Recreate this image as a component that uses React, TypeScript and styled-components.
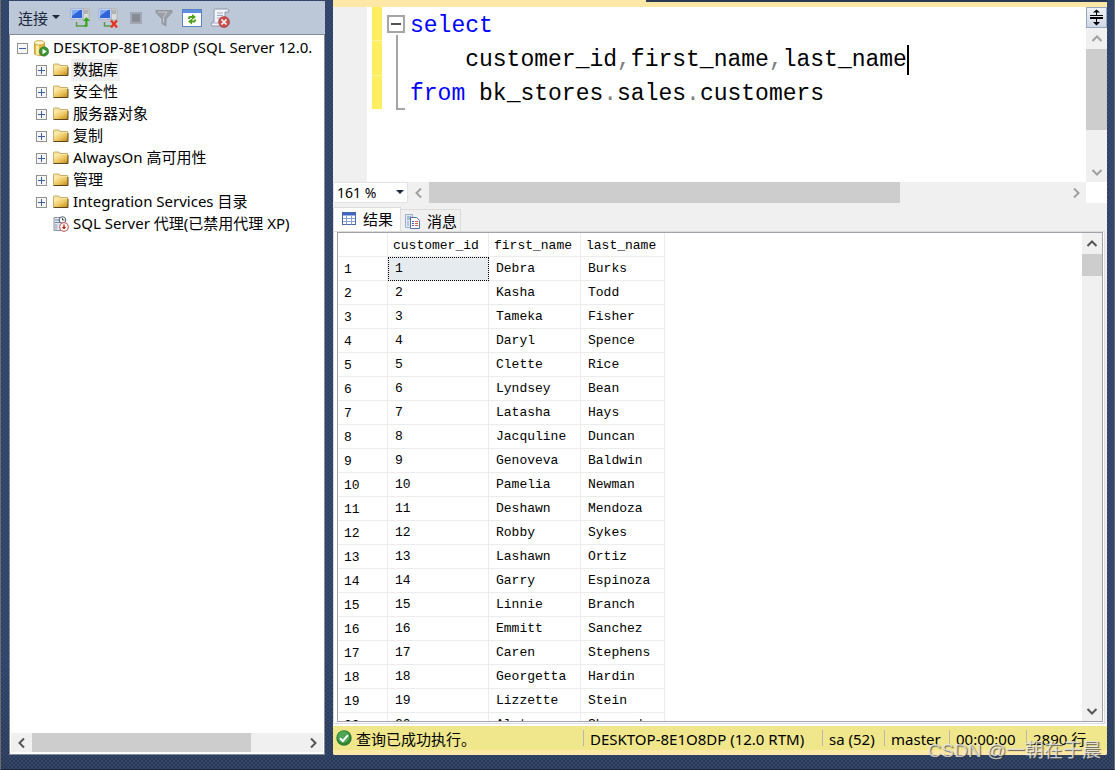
import React from "react";
import styled, { createGlobalStyle, css } from "styled-components";

const uiFont = `"Noto Sans", "Noto Sans CJK SC", sans-serif`;
const monoFont = `"Liberation Mono", "Noto Sans CJK SC", monospace`;

const GlobalStyle = createGlobalStyle`
  * { box-sizing: border-box; }
  body {
    margin: 0;
    background: #293955;
    color: #000;
    font-family: ${uiFont};
    font-size: 15px;
    overflow: hidden;
  }
  button, select { font: inherit; color: inherit; }
  button { border: 0; padding: 0; background: none; }
  svg { display: block; flex: none; }
`;

const Frame = styled.div`
  display: flex;
  gap: 8px;
  height: 100vh;
  padding: 0 7px 14px 8px;
  border: solid #6d6d70;
  border-width: 0 1px 0 1px;
  border-bottom: 1px solid #1d2740;
  background:
    radial-gradient(circle at 1px 1px, rgba(70, 95, 140, 0.35) 1px, transparent 1px) 0 0 / 4px 4px,
    radial-gradient(circle at 1px 1px, rgba(70, 95, 140, 0.35) 1px, transparent 1px) 2px 2px / 4px 4px,
    linear-gradient(#2f4165, #2f4165 85%, #293955);
`;

const Explorer = styled.aside`
  flex: 0 0 316px;
  display: flex;
  flex-direction: column;
  padding-top: 1px;
`;

const Toolbar = styled.div`
  display: flex;
  align-items: center;
  gap: 8px;
  height: 33px;
  padding-left: 9px;
  background: #bcc7d8;
`;

const ToolButton = styled.button`
  display: flex;
  align-items: center;
  justify-content: center;
  width: 20px;
  height: 22px;
`;

const ConnectButton = styled.button`
  display: flex;
  align-items: center;
  gap: 4px;
  height: 22px;
  margin-right: 2px;
  color: #1b293e;
`;

const TreePane = styled.div`
  flex: 1;
  display: flex;
  flex-direction: column;
  min-height: 0;
  padding: 2px 1px;
  border: 1px solid #848b99;
  background: #fff;
`;

const Tree = styled.ul`
  flex: 1;
  margin: 0;
  padding: 0;
  list-style: none;
  overflow: hidden;
`;

const TreeRow = styled.li<{ $level: number }>`
  display: flex;
  align-items: center;
  height: 22px;
  padding-left: ${(p) => (p.$level === 0 ? 6 : 25)}px;
  white-space: nowrap;
`;

const Expander = styled.button`
  display: flex;
  width: 11px;
  margin-right: 6px;
`;

const ExpanderSpace = styled.span`
  width: 17px;
`;

const TreeLabel = styled.span<{ $focused?: boolean }>`
  height: 22px;
  margin-left: 2px;
  padding: 0 2px;
  line-height: 20px;
  background: ${(p) => (p.$focused ? "#f0f0f0" : "transparent")};
`;

const Document = styled.main`
  flex: 1;
  min-width: 0;
  display: flex;
  flex-direction: column;
  background: #f0f0f0;
  border-radius: 0 0 2px 2px;
  overflow: hidden;
`;

const DocumentBand = styled.div`
  display: flex;
  flex: 0 0 7px;
  background: #ffe8a6;
`;

const ActiveTabEdge = styled.div`
  flex: 0 0 313px;
`;

const TabWellEdge = styled.div`
  flex: 1;
  height: 2px;
  background: #293955;
`;

const Editor = styled.section`
  display: flex;
  flex: 0 0 175px;
  background: #fff;
`;

const IndicatorMargin = styled.div`
  flex: 0 0 34px;
  background: #f0f0f0;
`;

const ChangeBars = styled.div`
  display: flex;
  flex-direction: column;
  gap: 1px;
  width: 10px;
  height: 102px;
  margin: 0 5px;
  background: #fff39b;
`;

const ChangeBar = styled.div`
  flex: 1;
  background: #ffee62;
`;

const Outline = styled.div`
  display: flex;
  flex-direction: column;
  align-items: center;
  width: 18px;
  height: 103px;
  padding-top: 8px;
`;

const OutlineBracket = styled.div`
  flex: 1;
  align-self: flex-end;
  width: 9px;
  margin-top: 2px;
  border: solid #a5a5a5;
  border-width: 0 0 2px 2px;
`;

const Code = styled.pre`
  flex: 1;
  margin: 0;
  padding: 2px 0 0 5px;
  font: 23px/34px ${monoFont};
  color: #000;
  overflow: hidden;
`;

const Keyword = styled.span`
  color: #0000ff;
`;

const Punct = styled.span`
  color: #808080;
`;

const Caret = styled.span`
  display: inline-block;
  width: 2px;
  height: 30px;
  vertical-align: middle;
  background: #000;
`;

const EditorRail = styled.div`
  display: flex;
  flex-direction: column;
  width: 21px;
`;

const SplitButton = styled.button`
  display: flex;
  align-items: center;
  justify-content: center;
  flex: 0 0 21px;
  border: 1px solid #98a6bd;
  background: linear-gradient(#eef2f8, #cfd6e5);
`;

const ScrollTrack = styled.div<{ $dir: "row" | "column"; $thick: number }>`
  flex: 1;
  display: flex;
  min-width: 0;
  min-height: 0;
  background: #f0f0f0;
  ${(p) =>
    p.$dir === "row"
      ? css`flex-direction: row; height: ${p.$thick}px;`
      : css`flex-direction: column; width: ${p.$thick}px;`}
`;

const ScrollArrow = styled.button<{ $active?: boolean }>`
  display: flex;
  align-items: center;
  justify-content: center;
  flex: 0 0 21px;
  color: ${(p) => (p.$active ? "#555" : "#a0a0a0")};
`;

const ScrollRange = styled.div<{ $dir: "row" | "column" }>`
  flex: 1;
  display: flex;
  flex-direction: ${(p) => p.$dir};
  min-height: 0;
`;

const ScrollThumb = styled.div`
  min-height: 19px;
  background: #cdcdcd;
`;

const ExplorerScroll = styled.div`
  display: flex;
  flex: 0 0 19px;
`;

const EditorFooter = styled.div`
  display: flex;
  flex: 0 0 21px;
`;

const ZoomBox = styled.label`
  position: relative;
  display: flex;
  align-items: center;
  flex: 0 0 75px;
  border: 1px solid #e0e3e8;
  background: #fff;
`;

const ZoomSelect = styled.select`
  width: 100%;
  height: 19px;
  padding: 0 0 0 3px;
  border: 0;
  appearance: none;
  background: transparent;
  font-size: 14px;
  line-height: 19px;
`;

const ZoomArrow = styled.span`
  position: absolute;
  right: 3px;
  pointer-events: none;
`;

const Corner = styled.div`
  width: 21px;
  background: #fff;
`;

const ResultTabs = styled.div`
  display: flex;
  align-items: flex-end;
  flex: 0 0 28px;
`;

const ResultTab = styled.button<{ $active?: boolean }>`
  display: flex;
  align-items: center;
  gap: 7px;
  height: ${(p) => (p.$active ? 24 : 22)}px;
  width: ${(p) => (p.$active ? 68 : 60)}px;
  padding: 0 0 ${(p) => (p.$active ? 3 : 0)}px ${(p) => (p.$active ? 8 : 4)}px;
  border: 1px solid #dcdcdc;
  border-bottom: 0;
  border-left: ${(p) => (p.$active ? "1px solid #dcdcdc" : 0)};
  background: ${(p) => (p.$active ? "#fff" : "#f0f0f0")};
  white-space: nowrap;
`;

const ResultPane = styled.div`
  flex: 1;
  display: flex;
  min-height: 0;
  padding: 0 1px 1px 2px;
  margin-right: 2px;
  border: 1px solid #dcdcdc;
  background: #fff;
`;

const ResultFrame = styled.div`
  flex: 1;
  display: flex;
  min-width: 0;
  border: 1px solid #a0a3a8;
  margin-left: 1px;
`;

const GridView = styled.div`
  flex: 1;
  min-width: 0;
  overflow: hidden;
`;

const Table = styled.table`
  border-collapse: separate;
  border-spacing: 0;
  table-layout: fixed;
  width: 327px;
  font: 13px/20px ${monoFont};
`;

const Col = styled.col<{ $w: number }>`
  width: ${(p) => p.$w}px;
`;

const HeadCell = styled.th`
  height: 24px;
  padding: 2px 0 0 5px;
  border: solid #ececec;
  border-width: 0 1px 1px 0;
  text-align: left;
  font-weight: 400;
`;

const RowNumber = styled.th`
  height: 24px;
  padding: 3px 0 0 6px;
  border: solid #ececec;
  border-width: 0 1px 1px 0;
  text-align: left;
  font-weight: 400;
`;

const Cell = styled.td<{ $focused?: boolean }>`
  height: 24px;
  padding: 0 0 0 7px;
  border: solid #ececec;
  border-width: 0 1px 1px 0;
  ${(p) =>
    p.$focused &&
    css`
      background: #e6ebf0;
      outline: 1px dotted #000;
      outline-offset: -1px;
    `}
`;

const PaneGap = styled.div`
  flex: 0 0 2px;
  background: #fff;
`;

const StatusBar = styled.footer`
  display: flex;
  align-items: center;
  flex: 0 0 24px;
  padding-left: 3px;
  background: #f0e68c;
  white-space: nowrap;
`;

const StatusMessage = styled.span`
  flex: 1;
  padding-left: 4px;
`;

const StatusItem = styled.span<{ $w: number }>`
  flex: 0 0 ${(p) => p.$w}px;
  height: 16px;
  line-height: 18px;
  padding-left: 6px;
  border-left: 1px solid #b9b9b0;
`;

const BottomBand = styled.div`
  flex: 0 0 5px;
  background: #ffe8a6;
`;

const Watermark = styled.div`
  position: absolute;
  right: 14px;
  bottom: 7px;
  font: 19px/24px "Liberation Sans", "Noto Sans CJK SC", sans-serif;
  color: rgba(235, 235, 235, 0.8);
  text-shadow: 1px 1px 1px rgba(60, 60, 60, 0.8);
  white-space: nowrap;
`;

type Direction = "up" | "down" | "left" | "right";

const chevrons: Record<Direction, string> = {
  up: "M1.5 8 6 3.5 10.5 8",
  down: "M1.5 4 6 8.5 10.5 4",
  left: "M8 1.5 3.5 6 8 10.5",
  right: "M4 1.5 8.5 6 4 10.5",
};

const Chevron = ({ dir }: { dir: Direction }) => (
  <svg width="12" height="12" viewBox="0 0 12 12">
    <path d={chevrons[dir]} fill="none" stroke="currentColor" strokeWidth="2" />
  </svg>
);

const DownTriangle = () => (
  <svg width="8" height="5" viewBox="0 0 8 5">
    <path d="M0 0h8L4 4z" fill="#1b293e" />
  </svg>
);

interface ScrollBarProps {
  dir: "row" | "column";
  size: number;
  active?: boolean;
  thick?: number;
}

const ScrollBar = ({ dir, size, active, thick = 21 }: ScrollBarProps) => {
  const [first, last]: Direction[] = dir === "row" ? ["left", "right"] : ["up", "down"];
  return (
    <ScrollTrack $dir={dir} $thick={thick}>
      <ScrollArrow $active={active} aria-label={`Scroll ${first}`}>
        <Chevron dir={first} />
      </ScrollArrow>
      <ScrollRange $dir={dir}>
        <ScrollThumb style={{ flexBasis: `${size}%` }} />
      </ScrollRange>
      <ScrollArrow $active={active} aria-label={`Scroll ${last}`}>
        <Chevron dir={last} />
      </ScrollArrow>
    </ScrollTrack>
  );
};

const ServersIcon = ({ mark }: { mark: "connect" | "disconnect" }) => (
  <svg width="20" height="20" viewBox="0 0 20 20">
    <path d="M13 1h6v11h-6z" fill="#dcdcda" stroke="#aaa" strokeWidth=".8" />
    <path d="M14 3h4M14 5h4" stroke="#8a8a8a" />
    <path d="M1 1h12v10H1z" fill="#e8eefc" stroke="#8ba0d2" strokeWidth=".8" />
    <path d="M2 2h10v8H2z" fill="#2f63d8" />
    <path d="M2 2h8L2 8z" fill="#7ea8f5" />
    <path d="M5 11h4v1.500h2V14H3v-1.500h2z" fill="#c3c6ce" />
    <path d="M6.500 14v4H15" fill="none" stroke="#5b9a4a" strokeWidth="1.500" />
    {mark === "connect" ? (
      <path d="M14 18.700h3.500v-5.700H20L16.300 9l-3.300 4h2.300v4H14z" fill="#35a51c" />
    ) : (
      <path d="m13 12.500 6 7m0-7-6 7" stroke="#e8321b" strokeWidth="2.200" />
    )}
  </svg>
);

const StopIcon = () => (
  <svg width="12" height="12" viewBox="0 0 12 12">
    <rect x="0" y="0" width="12" height="12" fill="#a3a9b4" />
    <rect x="2" y="2" width="8" height="8" fill="#868b94" />
  </svg>
);

const FilterIcon = () => (
  <svg width="18" height="18" viewBox="0 0 18 18">
    <path d="M1 1.500h16v2L11 10v7l-4-2.500V10L1 3.500z" fill="#9c9fa6" stroke="#8b8f97" strokeWidth=".8" />
    <path d="M3 3h9L8.500 8.500v5" fill="none" stroke="#c6c9cf" />
  </svg>
);

const RefreshIcon = () => (
  <svg width="20" height="18" viewBox="0 0 20 18">
    <rect x=".5" y=".5" width="19" height="17" fill="#fff" stroke="#5b83c4" />
    <path d="M1 1h18v3H1z" fill="#5b8fe0" />
    <path d="M6 10V9q0-2 2-2h2V5l4 3-4 3V9H8v1zM14 10.500v1q0 2-2 2h-2v2l-4-3 4-3v2h2v-1z" fill="#4da41c" />
  </svg>
);

const ScriptErrorIcon = () => (
  <svg width="20" height="20" viewBox="0 0 20 20">
    <path d="M5 1h12q2 0 2 3h-4v11q0 2-2 3H2q-2-2 0-4h2V3q0-2 1-2z" fill="#f2f4f8" stroke="#8d98ad" />
    <path d="M7 5h6M7 7.500h6M7 10h4M2 15h6" stroke="#9fabc2" />
    <circle cx="14" cy="14" r="5.500" fill="#c94f4f" stroke="#a33" strokeWidth=".6" />
    <path d="m11.500 11.500 5 5m0-5-5 5" stroke="#fff" strokeWidth="1.600" />
  </svg>
);

const ServerRunIcon = () => (
  <svg width="15" height="17" viewBox="0 0 15 17">
    <path d="M.5 3v11q4 3 10 1V3z" fill="#e8b93c" stroke="#b58a25" strokeWidth=".7" />
    <path d="M2 4.500v10q1.500.8 3 .9V4.500z" fill="#fbe9a8" />
    <ellipse cx="5.500" cy="2.800" rx="5" ry="2.200" fill="#fff4c8" stroke="#b58a25" strokeWidth=".7" />
    <circle cx="10" cy="11.500" r="4.700" fill="#3c9436" stroke="#236b24" strokeWidth=".5" />
    <path d="m8.500 8.800 4.200 2.700-4.200 2.700z" fill="#fff" />
  </svg>
);

const FolderIcon = () => (
  <svg width="16" height="14" viewBox="0 0 16 14">
    <defs>
      <linearGradient id="folder" x1="0" y1="0" x2="1" y2="1">
        <stop offset="0" stopColor="#fff3bd" />
        <stop offset=".55" stopColor="#ecc35a" />
        <stop offset="1" stopColor="#b8841c" />
      </linearGradient>
    </defs>
    <path d="M.5 12V2q0-1 1-1h4.500l1 1.500h7.500V12z" fill="#f8e5a1" stroke="#b99a4d" strokeWidth=".8" />
    <path d="M1 4h14v8.500H1z" fill="url(#folder)" />
    <path d="M.500 12.500h14.500V4" fill="none" stroke="#5d4718" strokeWidth="1" />
  </svg>
);

const AgentIcon = () => (
  <svg width="16" height="16" viewBox="0 0 16 16">
    <path d="M1 1.500h8v13H1z" fill="#e4e8ef" stroke="#7f8a9c" strokeWidth=".9" />
    <path d="M2 4h5M2 6.500h5" stroke="#7087ad" />
    <path d="M2 8h2.500v5.500H2z" fill="#b9c3d2" />
    <circle cx="9.500" cy="4" r="3.300" fill="#fff" stroke="#4c5a70" />
    <path d="M9.500 2v2h2" fill="none" stroke="#333" strokeWidth=".9" />
    <circle cx="11" cy="11" r="4.300" fill="#fff" stroke="#c07070" strokeWidth="1.200" />
    <path d="M10.300 8.500h1.400v2.500h1.600L11 13.500 8.700 11h1.600z" fill="#d0201c" />
  </svg>
);

const ToggleIcon = ({ open }: { open?: boolean }) => (
  <svg width="11" height="11" viewBox="0 0 11 11">
    <rect x=".5" y=".5" width="10" height="10" fill="#f6f6f6" stroke="#929292" />
    <path d={open ? "M2 5.500h7" : "M2 5.500h7M5.500 2v7"} stroke="#3f5fa8" />
  </svg>
);

const CollapseIcon = () => (
  <svg width="18" height="18" viewBox="0 0 18 18">
    <rect x="1" y="1" width="16" height="16" fill="#fff" stroke="#a5a5a5" strokeWidth="2" />
    <path d="M4 9h10" stroke="#555" strokeWidth="2" />
  </svg>
);

const SplitIcon = () => (
  <svg width="13" height="17" viewBox="0 0 13 17">
    <path d="M0 6.500h13" stroke="#000" />
    <path d="M0 9h13" stroke="#000" strokeWidth="2" />
    <path d="M6.500 1v5.500M6.500 9v7" stroke="#000" />
    <path d="m3 3.500 3.500-3 3.500 3zM3 13l3.500 3.500L10 13z" />
  </svg>
);

const GridIcon = () => (
  <svg width="14" height="13" viewBox="0 0 14 13">
    <rect x=".5" y=".5" width="13" height="12" fill="#fff" stroke="#4c6aa8" />
    <path d="M1 1h12v2.500H1z" fill="#3d63c4" />
    <path d="M1 6.500h12M1 9.500h12M4.500 3.500v9M9.500 3.500v9" stroke="#8ba3cf" />
  </svg>
);

const MessageIcon = () => (
  <svg width="15" height="16" viewBox="0 0 15 16">
    <path d="M.5 1.500h7v13h-7z" fill="#e2e9f2" stroke="#9db0cb" />
    <path d="M2 4h4M2 6h4" stroke="#6a8abf" />
    <path d="M2 8h2v5H2z" fill="#b3c5dc" />
    <path d="M5.500 4.500h6l3 3v8h-9z" fill="#fff" stroke="#5573a5" />
    <path d="M7 8.500h2M7 10.500h2M7 12.500h2" stroke="#3e64b5" />
    <path d="M10 8.500h3M10 10.500h3M10 12.500h3" stroke="#d0603f" />
  </svg>
);

const SuccessIcon = () => (
  <svg width="16" height="16" viewBox="0 0 16 16">
    <circle cx="8" cy="8" r="7.700" fill="#2f8135" />
    <circle cx="7.500" cy="7" r="6" fill="#4ea654" />
    <path d="m4 8.300 2.800 2.700L12 5.200" fill="none" stroke="#fff" strokeWidth="2" />
  </svg>
);

const folders = ["数据库", "安全性", "服务器对象", "复制", "AlwaysOn 高可用性", "管理", "Integration Services 目录"];

const customers: [string, string][] = [
  ["Debra", "Burks"],
  ["Kasha", "Todd"],
  ["Tameka", "Fisher"],
  ["Daryl", "Spence"],
  ["Clette", "Rice"],
  ["Lyndsey", "Bean"],
  ["Latasha", "Hays"],
  ["Jacquline", "Duncan"],
  ["Genoveva", "Baldwin"],
  ["Pamelia", "Newman"],
  ["Deshawn", "Mendoza"],
  ["Robby", "Sykes"],
  ["Lashawn", "Ortiz"],
  ["Garry", "Espinoza"],
  ["Linnie", "Branch"],
  ["Emmitt", "Sanchez"],
  ["Caren", "Stephens"],
  ["Georgetta", "Hardin"],
  ["Lizzette", "Stein"],
  ["Aleta", "Shepard"],
];

const ObjectExplorer = () => (
  <Explorer>
    <Toolbar>
      <ConnectButton>
        连接
        <DownTriangle />
      </ConnectButton>
      <ToolButton aria-label="Connect"><ServersIcon mark="connect" /></ToolButton>
      <ToolButton aria-label="Disconnect"><ServersIcon mark="disconnect" /></ToolButton>
      <ToolButton aria-label="Stop"><StopIcon /></ToolButton>
      <ToolButton aria-label="Filter"><FilterIcon /></ToolButton>
      <ToolButton aria-label="Refresh"><RefreshIcon /></ToolButton>
      <ToolButton aria-label="Script errors"><ScriptErrorIcon /></ToolButton>
    </Toolbar>
    <TreePane>
      <Tree>
        <TreeRow $level={0}>
          <Expander aria-label="Collapse server"><ToggleIcon open /></Expander>
          <ServerRunIcon />
          <TreeLabel>DESKTOP-8E1O8DP (SQL Server 12.0.</TreeLabel>
        </TreeRow>
        {folders.map((name, i) => (
          <TreeRow key={name} $level={1}>
            <Expander aria-label={`Expand ${name}`}><ToggleIcon /></Expander>
            <FolderIcon />
            <TreeLabel $focused={i === 0}>{name}</TreeLabel>
          </TreeRow>
        ))}
        <TreeRow $level={1}>
          <ExpanderSpace />
          <AgentIcon />
          <TreeLabel>SQL Server 代理(已禁用代理 XP)</TreeLabel>
        </TreeRow>
      </Tree>
      <ExplorerScroll>
        <ScrollBar dir="row" size={81} active thick={19} />
      </ExplorerScroll>
    </TreePane>
  </Explorer>
);

const QueryEditor = () => (
  <>
    <Editor>
      <IndicatorMargin />
      <ChangeBars>
        <ChangeBar />
        <ChangeBar />
        <ChangeBar />
      </ChangeBars>
      <Outline>
        <CollapseIcon />
        <OutlineBracket />
      </Outline>
      <Code>
        <Keyword>select</Keyword>
        {"\n    customer_id"}
        <Punct>,</Punct>first_name<Punct>,</Punct>last_name<Caret />
        {"\n"}
        <Keyword>from</Keyword> bk_stores<Punct>.</Punct>sales<Punct>.</Punct>customers
      </Code>
      <EditorRail>
        <SplitButton aria-label="Split editor"><SplitIcon /></SplitButton>
        <ScrollBar dir="column" size={72} />
      </EditorRail>
    </Editor>
    <EditorFooter>
      <ZoomBox>
        <ZoomSelect aria-label="Zoom" defaultValue="161 %">
          <option>161 %</option>
        </ZoomSelect>
        <ZoomArrow><DownTriangle /></ZoomArrow>
      </ZoomBox>
      <ScrollBar dir="row" size={74} />
      <Corner />
    </EditorFooter>
  </>
);

const ResultRail = styled.div`
  display: flex;
  flex: 0 0 20px;
`;

const Results = () => (
  <>
    <ResultTabs role="tablist">
      <ResultTab role="tab" aria-selected $active><GridIcon />结果</ResultTab>
      <ResultTab role="tab" aria-selected={false}><MessageIcon />消息</ResultTab>
    </ResultTabs>
    <ResultPane>
      <ResultFrame>
        <GridView>
          <Table>
            <colgroup>
              <Col $w={50} />
              <Col $w={101} />
              <Col $w={92} />
              <Col $w={84} />
            </colgroup>
            <thead>
              <tr>
                <HeadCell aria-label="Row" />
                <HeadCell>customer_id</HeadCell>
                <HeadCell>first_name</HeadCell>
                <HeadCell>last_name</HeadCell>
              </tr>
            </thead>
            <tbody>
              {customers.map(([first, last], i) => (
                <tr key={i}>
                  <RowNumber scope="row">{i + 1}</RowNumber>
                  <Cell $focused={i === 0}>{i + 1}</Cell>
                  <Cell>{first}</Cell>
                  <Cell>{last}</Cell>
                </tr>
              ))}
            </tbody>
          </Table>
        </GridView>
        <ResultRail>
          <ScrollBar dir="column" size={5} active thick={20} />
        </ResultRail>
      </ResultFrame>
    </ResultPane>
  </>
);

const App = () => (
  <>
    <GlobalStyle />
    <Frame>
      <ObjectExplorer />
      <Document>
        <DocumentBand>
          <ActiveTabEdge />
          <TabWellEdge />
        </DocumentBand>
        <QueryEditor />
        <Results />
        <PaneGap />
        <StatusBar>
          <SuccessIcon />
          <StatusMessage>查询已成功执行。</StatusMessage>
          <StatusItem $w={239}>DESKTOP-8E1O8DP (12.0 RTM)</StatusItem>
          <StatusItem $w={62}>sa (52)</StatusItem>
          <StatusItem $w={65}>master</StatusItem>
          <StatusItem $w={77}>00:00:00</StatusItem>
          <StatusItem $w={81}>2890 行</StatusItem>
        </StatusBar>
        <BottomBand />
      </Document>
    </Frame>
    <Watermark>CSDN @一朝在于晨</Watermark>
  </>
);

export default App;
